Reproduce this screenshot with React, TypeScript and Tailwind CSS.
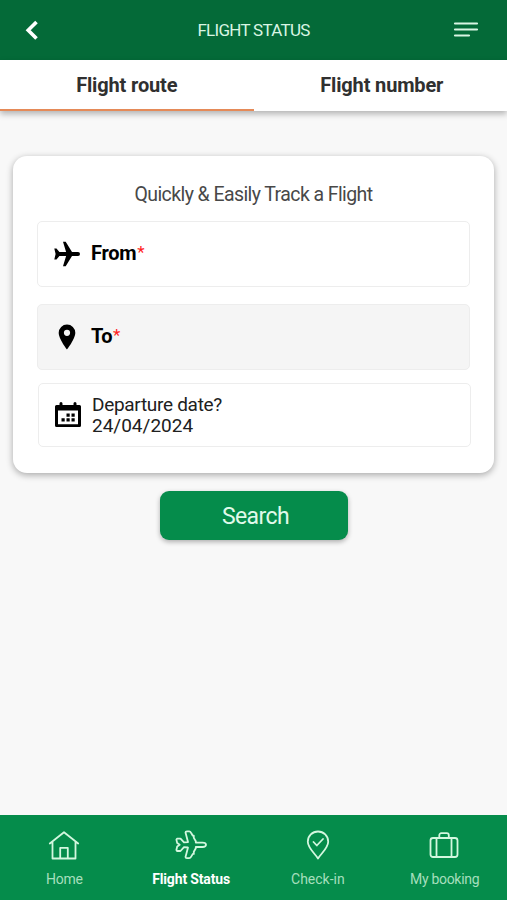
import { ReactNode } from "react";

interface TabProps {
    label: string;
    labelClass: string;
    active?: boolean;
}

function Tab({ label, labelClass, active }: TabProps) {
    return (
        <button
            className={`flex-1 h-[51px] border-b-2 pt-[1px] text-[20px] leading-[48px] font-bold text-[#303030] whitespace-nowrap ${
                active ? "border-[#e58a58]" : "border-white"
            }`}
        >
            <span className={labelClass}>{label}</span>
        </button>
    );
}

interface FieldProps {
    icon: ReactNode;
    className: string;
    children: ReactNode;
}

function Field({ icon, className, children }: FieldProps) {
    return (
        <div
            className={`flex items-center rounded-[5px] border-[1.5px] border-[#ededed] pl-[14px] text-black ${className}`}
        >
            <div className="flex w-[30px] shrink-0 justify-center">{icon}</div>
            {children}
        </div>
    );
}

interface NavItemProps {
    icon: ReactNode;
    label: string;
    className: string;
}

function NavItem({ icon, label, className }: NavItemProps) {
    return (
        <a
            href="#"
            className={`flex flex-1 flex-col items-center pl-[2px] pt-[14px] whitespace-nowrap text-[14px] leading-[20px] ${className}`}
        >
            <svg
                className="h-8 w-8 text-[#d3f7df]"
                viewBox="0 0 32 32"
                fill="none"
                stroke="currentColor"
                strokeWidth="1.8"
                strokeLinecap="round"
                strokeLinejoin="round"
            >
                {icon}
            </svg>
            <span className="mt-[8px]">{label}</span>
        </a>
    );
}

function Header() {
    return (
        <header className="flex h-[60px] items-center justify-between bg-[#046a38] pl-[25px] pr-[28px] text-white">
            <svg className="h-[22px] w-[16px]" viewBox="0 0 16 22" fill="none" stroke="currentColor" strokeWidth="3.6">
                <path d="M11.5 3 3.2 11.300l8.300 8.300" />
            </svg>
            <h1 className="pl-[13px] pt-[2px] text-[17px] tracking-[-0.72px] text-[#d9f5e3]">FLIGHT STATUS</h1>
            <svg className="h-[18px] w-[26px]" viewBox="0 0 26 18" stroke="#d9f5e3" strokeWidth="2.2" strokeLinecap="round">
                <path d="M2 2.500h22M2 8.500h22M2 14.500h14" />
            </svg>
        </header>
    );
}

function App() {
    return (
        <div className="flex h-[900px] w-[507px] flex-col bg-[#f8f8f8] font-['Roboto','Noto_Sans',sans-serif]">
            <Header />
            <div className="flex bg-white shadow-[0_3px_6px_rgba(0,0,0,0.28)]">
                <Tab label="Flight route" labelClass="tracking-[-0.15px]" active />
                <Tab label="Flight number" labelClass="pl-[3px] tracking-[-0.15px]" />
            </div>

            <main className="flex-1 px-[13px] pt-[45px]">
                <section className="h-[317px] rounded-[14px] bg-white px-[24px] pt-[26px] shadow-[0_2px_7px_rgba(0,0,0,0.33)]">
                    <h2 className="text-center text-[19.5px] leading-[26px] tracking-[-0.58px] text-[#484848]">
                        Quickly &amp; Easily Track a Flight
                    </h2>
                    <Field
                        className="mt-[13px] h-[66px] w-[433px]"
                        icon={
                            <svg className="h-[26px] w-[28px]" viewBox="0 0 28 26" fill="currentColor">
                                <path d="M10 .8h2.700L19 11h6a2 2 0 0 1 0 4h-6l-6.300 10.200H10L13.100 15H6.400l-2.900 3.400H1.300L2.600 13 1.300 7.600h2.200L6.400 11h6.700z" />
                            </svg>
                        }
                    >
                        <span className="pl-[9px] pb-[3px] text-[20px] font-bold tracking-[-0.3px]">
                            From<span className="pl-[1px] align-[2px] text-[17px] font-normal text-[#f22]">*</span>
                        </span>
                    </Field>
                    <Field
                        className="mt-[17px] h-[66px] w-[433px] bg-[#f5f5f5]"
                        icon={
                            <svg className="h-[26px] w-[18px]" viewBox="0 0 18 26" fill="currentColor">
                                <path
                                    fillRule="evenodd"
                                    d="M9 .5a8.300 8.300 0 0 0-8.300 8.300C.7 15 9 25.500 9 25.500S17.300 15 17.300 8.800A8.300 8.300 0 0 0 9 .5Zm0 5.200a3.100 3.100 0 1 1 0 6.200 3.100 3.100 0 0 1 0-6.200Z"
                                />
                            </svg>
                        }
                    >
                        <span className="pl-[9px] pb-[3px] text-[20px] font-bold tracking-[-0.5px]">
                            To<span className="pl-[1px] align-[2px] text-[17px] font-normal text-[#f22]">*</span>
                        </span>
                    </Field>
                    <Field
                        className="ml-[1px] mt-[13px] h-[64px] w-[433px]"
                        icon={
                            <svg className="h-[26px] w-[28px]" viewBox="0 0 28 26" fill="currentColor">
                                <path
                                    fillRule="evenodd"
                                    d="M2.500 3H5.500V1.500a1.500 1.500 0 0 1 3 0V3h11V1.500a1.500 1.500 0 0 1 3 0V3h3a1.500 1.500 0 0 1 1.500 1.500v19a1.500 1.500 0 0 1-1.500 1.500h-23A1.500 1.500 0 0 1 1 23.500v-19A1.500 1.500 0 0 1 2.500 3ZM4 8.500V22.200h20V8.500Z"
                                />
                                <path d="M12.500 11.500h3.200v3.200h-3.200zM17.500 11.500h3.200v3.200h-3.200zM7.500 16.200h3.200v3.200H7.500zM12.500 16.200h3.200v3.200h-3.200zM17.500 16.200h3.200v3.200h-3.200z" />
                            </svg>
                        }
                    >
                        <div className="flex flex-col pl-[9px] text-[19px] leading-[21px] text-[#202020]">
                            <span className="tracking-[-0.3px]">Departure date?</span>
                            <span>24/04/2024</span>
                        </div>
                    </Field>
                </section>
                <button className="mx-auto mt-[18px] block h-[49px] w-[188px] rounded-[9px] bg-[#058c4b] pl-[4px] pt-[3px] text-[23px] tracking-[-0.6px] text-[#e0faea] shadow-[0_2px_5px_rgba(0,0,0,0.3)]">
                    Search
                </button>
            </main>

            <nav className="flex h-[85px] bg-[#058c4b]">
                <NavItem
                    label="Home"
                    className="text-[#a5dfbd] tracking-[-0.2px]"
                    icon={<path d="M1.800 14.500 16 3.200l14.200 11.300M4.500 12.500v17h23v-17M12.200 29.500V18.800h7.600v10.700" />}
                />
                <NavItem
                    label="Flight Status"
                    className="font-bold text-white tracking-[-0.15px]"
                    icon={
                        <path d="M10.500 3.500c0-.8.600-1.100 1.500-1.100h2.200c1 0 1.500.700 2 1.600l1.600 2.700h1v2.200l2 3.400v1.300h6.700c2 0 3.500 1.100 3.500 2.200S29.500 18 27.500 18h-6.700v1.300l-2 3.400v2.200h-1L16.200 27.600c-.5.900-1 1.600-2 1.600H12c-.9 0-1.500-.3-1.500-1.100L13 18.500 9 18.200 5.500 22H2l-.6-1 .8-3.500 2.500-1.700-2.500-1.700-.8-3.500.6-1h3.500L9 13.400l4-.3z" />
                    }
                />
                <NavItem
                    label="Check-in"
                    className="text-[#a5dfbd]"
                    icon={
                        <>
                            <path d="M16 29.500C13 24.500 5.800 19 5.800 12.700a10.200 10.200 0 0 1 20.400 0C26.200 19 19 24.500 16 29.500Z" />
                            <path d="m11.500 13 3.300 3.500 6.200-6.500" />
                        </>
                    }
                />
                <NavItem
                    label="My booking"
                    className="text-[#a5dfbd] tracking-[-0.3px]"
                    icon={
                        <>
                            <rect x="1.500" y="9" width="27" height="19" rx="2.500" />
                            <path d="M7.500 9v19M22.500 9v19M10.300 9V6.200a2 2 0 0 1 2-2h5.500a2 2 0 0 1 2 2V9" />
                        </>
                    }
                />
            </nav>
        </div>
    );
}

export default App;
